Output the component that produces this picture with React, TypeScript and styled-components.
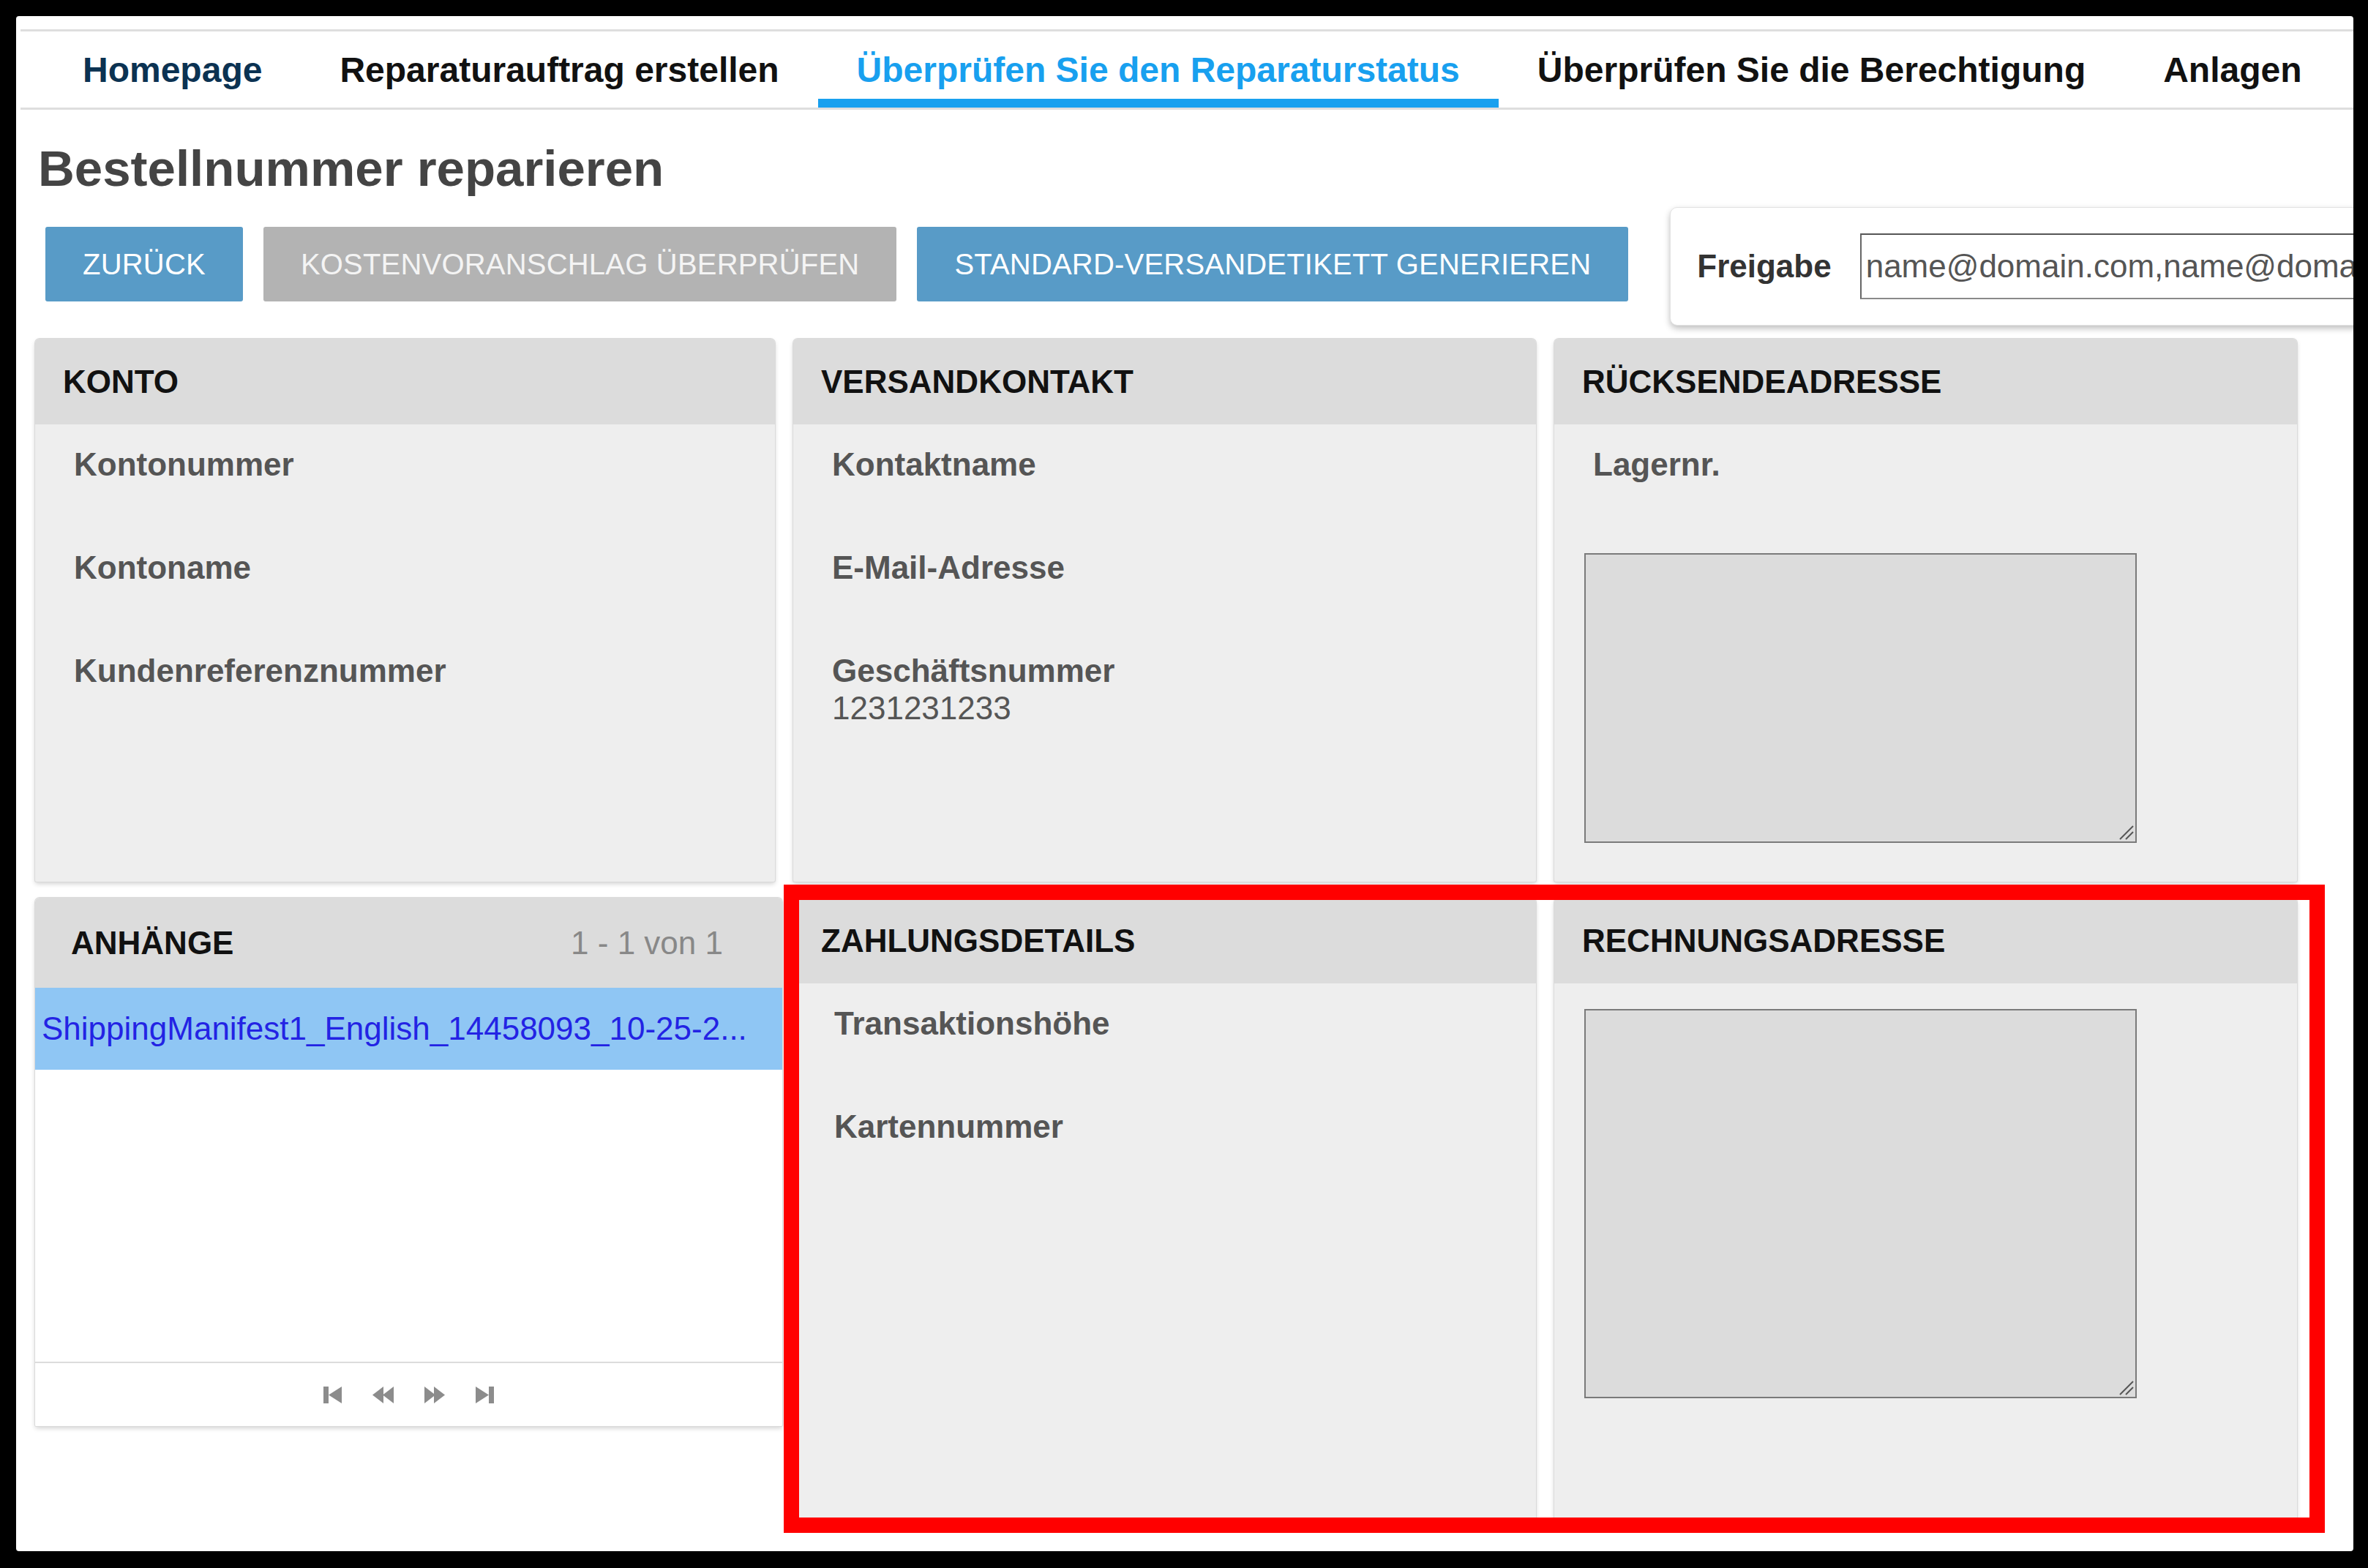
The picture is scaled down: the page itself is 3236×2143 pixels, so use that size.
import React from "react";
import styled, { createGlobalStyle } from "styled-components";

const GlobalStyle = createGlobalStyle`
  html, body {
    margin: 0;
    padding: 0;
    background: #000;
  }
  body {
    font-family: "Liberation Sans", Arial, sans-serif;
  }
  * {
    box-sizing: border-box;
  }
`;

type TabState = "home" | "active" | "plain";

const tabs: { label: string; state: TabState }[] = [
  { label: "Homepage", state: "home" },
  { label: "Reparaturauftrag erstellen", state: "plain" },
  { label: "Überprüfen Sie den Reparaturstatus", state: "active" },
  { label: "Überprüfen Sie die Berechtigung", state: "plain" },
  { label: "Anlagen", state: "plain" },
];

const HandleIcon = () => (
  <svg width="26" height="26" viewBox="0 0 26 26">
    <line x1="25" y1="7" x2="7" y2="25" stroke="#555" strokeWidth="2" />
    <line x1="25" y1="15" x2="15" y2="25" stroke="#555" strokeWidth="2" />
  </svg>
);

const FirstIcon = () => (
  <svg width="25" height="23" viewBox="0 0 25 23">
    <rect x="0" y="0" width="7" height="23" fill="#8c8c8c" />
    <polygon points="25,0 7,11.5 25,23" fill="#8c8c8c" />
  </svg>
);

const PrevIcon = () => (
  <svg width="29" height="23" viewBox="0 0 29 23">
    <polygon points="15,0 0,11.5 15,23" fill="#8c8c8c" />
    <polygon points="29,0 14,11.5 29,23" fill="#8c8c8c" />
  </svg>
);

const NextIcon = () => (
  <svg width="28" height="23" viewBox="0 0 28 23">
    <polygon points="0,0 15,11.5 0,23" fill="#8c8c8c" />
    <polygon points="13,0 28,11.5 13,23" fill="#8c8c8c" />
  </svg>
);

const LastIcon = () => (
  <svg width="25" height="23" viewBox="0 0 25 23">
    <polygon points="0,0 18,11.5 0,23" fill="#8c8c8c" />
    <rect x="18" y="0" width="7" height="23" fill="#8c8c8c" />
  </svg>
);

const App = () => {
  return (
    <>
      <GlobalStyle />
      <Frame>
        <Nav>
          {tabs.map((tab) => (
            <Tab key={tab.label} $state={tab.state}>
              {tab.label}
            </Tab>
          ))}
        </Nav>

        <Content>
          <Title>Bestellnummer reparieren</Title>

          <Toolbar>
            <ActionButton $tone="blue">Zurück</ActionButton>
            <ActionButton $tone="gray">Kostenvoranschlag überprüfen</ActionButton>
            <ActionButton $tone="blue">Standard-Versandetikett generieren</ActionButton>
            <ShareBox>
              <ShareLabel>Freigabe</ShareLabel>
              <ShareInput readOnly value="name@domain.com,name@domain.com" />
            </ShareBox>
          </Toolbar>

          <Grid>
            <Panel $height={742}>
              <PanelHeader>Konto</PanelHeader>
              <PanelBody>
                <Field>
                  <FieldLabel>Kontonummer</FieldLabel>
                </Field>
                <Field>
                  <FieldLabel>Kontoname</FieldLabel>
                </Field>
                <Field>
                  <FieldLabel>Kundenreferenznummer</FieldLabel>
                </Field>
              </PanelBody>
            </Panel>

            <Panel $height={742}>
              <PanelHeader>Versandkontakt</PanelHeader>
              <PanelBody>
                <Field>
                  <FieldLabel>Kontaktname</FieldLabel>
                </Field>
                <Field>
                  <FieldLabel>E-Mail-Adresse</FieldLabel>
                </Field>
                <Field>
                  <FieldLabel>Geschäftsnummer</FieldLabel>
                  <FieldValue>1231231233</FieldValue>
                </Field>
              </PanelBody>
            </Panel>

            <Panel $height={742}>
              <PanelHeader>Rücksendeadresse</PanelHeader>
              <PanelBody>
                <Field>
                  <FieldLabel>Lagernr.</FieldLabel>
                </Field>
                <AddressBox $height={396} $top={6}>
                  <ResizeHandle>
                    <HandleIcon />
                  </ResizeHandle>
                </AddressBox>
              </PanelBody>
            </Panel>

            <Panel $height={722} $wide $light>
              <PanelHeader $height={123} $padLeft={49} $padRight={81}>
                Anhänge
                <PageCount>1 - 1 von 1</PageCount>
              </PanelHeader>
              <AttachmentRow>ShippingManifest1_English_14458093_10-25-2...</AttachmentRow>
              <AttachmentList />
              <Pager>
                <FirstIcon />
                <PrevIcon />
                <NextIcon />
                <LastIcon />
              </Pager>
            </Panel>

            <Panel $height={858}>
              <PanelHeader>Zahlungsdetails</PanelHeader>
              <PanelBody $padLeft={56}>
                <Field>
                  <FieldLabel>Transaktionshöhe</FieldLabel>
                </Field>
                <Field>
                  <FieldLabel>Kartennummer</FieldLabel>
                </Field>
              </PanelBody>
            </Panel>

            <Panel $height={858}>
              <PanelHeader>Rechnungsadresse</PanelHeader>
              <PanelBody $padTop={35}>
                <AddressBox $height={532} $top={0}>
                  <ResizeHandle>
                    <HandleIcon />
                  </ResizeHandle>
                </AddressBox>
              </PanelBody>
            </Panel>
          </Grid>
        </Content>

        <Highlight />
      </Frame>
    </>
  );
};

export default App;

const Frame = styled.div`
  position: relative;
  margin: 22px 20px 0 22px;
  width: 3194px;
  height: 2098px;
  background: #fff;
  border-radius: 4px;
  overflow: hidden;
`;

const Nav = styled.nav`
  display: flex;
  height: 110px;
  margin: 18px 0 0 6px;
  padding-left: 32px;
  border-top: 3px solid #dedede;
  border-bottom: 3px solid #dedede;
`;

const Tab = styled.a<{ $state: TabState }>`
  display: flex;
  align-items: center;
  height: 100%;
  padding: 0 53px;
  font-size: 48px;
  font-weight: 700;
  white-space: nowrap;
  cursor: pointer;
  color: ${(p) =>
    p.$state === "home" ? "#0b3252" : p.$state === "active" ? "#18a0ef" : "#111"};
  box-shadow: ${(p) => (p.$state === "active" ? "inset 0 -12px 0 #18a0ef" : "none")};
`;

const Content = styled.main`
  padding: 0 76px 0 26px;
`;

const Title = styled.h1`
  margin: 41px 0 0 4px;
  font-size: 69px;
  line-height: 79px;
  font-weight: 700;
  color: #444;
`;

const Toolbar = styled.div`
  display: flex;
  align-items: flex-start;
  gap: 28px;
  margin: 13px -140px 0 0;
  padding-left: 14px;
`;

const ActionButton = styled.button<{ $tone: "blue" | "gray" }>`
  flex: none;
  height: 102px;
  margin-top: 27px;
  padding: 0 51px;
  border: none;
  border-radius: 3px;
  font-family: "Liberation Sans", Arial, sans-serif;
  font-size: 40px;
  letter-spacing: 0.2px;
  text-transform: uppercase;
  white-space: nowrap;
  color: ${(p) => (p.$tone === "blue" ? "#fff" : "#f4f4f4")};
  background: ${(p) => (p.$tone === "blue" ? "#589bc7" : "#b3b3b3")};
  cursor: pointer;
`;

const ShareBox = styled.div`
  flex: 1;
  display: flex;
  align-items: center;
  gap: 39px;
  height: 162px;
  margin-left: 29px;
  padding-left: 36px;
  background: #fff;
  border: 1px solid #e2e2e2;
  border-radius: 10px;
  box-shadow: 0 4px 8px rgba(0, 0, 0, 0.25);
`;

const ShareLabel = styled.span`
  font-size: 44px;
  font-weight: 700;
  color: #333;
`;

const ShareInput = styled.input`
  flex: 1;
  height: 90px;
  padding: 0 6px;
  border: 2px solid #8a8a8a;
  border-top-color: #555;
  border-left-color: #666;
  font-family: "Liberation Sans", Arial, sans-serif;
  font-size: 44px;
  color: #555;
  outline: none;
`;

const Grid = styled.div`
  display: grid;
  grid-template-columns: 1011px 1015px 1015px;
  column-gap: 25px;
  row-gap: 22px;
  align-items: start;
  margin-top: 18px;
`;

const Panel = styled.section<{ $height: number; $wide?: boolean; $light?: boolean }>`
  display: flex;
  flex-direction: column;
  height: ${(p) => p.$height}px;
  margin-right: ${(p) => (p.$wide ? "-10px" : "0")};
  background: ${(p) => (p.$light ? "#fff" : "#eee")};
  border-radius: 6px 6px 2px 2px;
  box-shadow: 0 0 0 1px #dadada, 0 3px 6px rgba(0, 0, 0, 0.18);
  overflow: hidden;
`;

const PanelHeader = styled.header<{ $height?: number; $padLeft?: number; $padRight?: number }>`
  flex: none;
  display: flex;
  align-items: center;
  justify-content: space-between;
  height: ${(p) => p.$height ?? 117}px;
  padding: 0 ${(p) => p.$padRight ?? 40}px 0 ${(p) => p.$padLeft ?? 38}px;
  background: #dcdcdc;
  font-size: 44px;
  font-weight: 700;
  color: #111;
  text-transform: uppercase;
`;

const PageCount = styled.span`
  font-weight: 400;
  color: #888;
  text-transform: none;
`;

const PanelBody = styled.div<{ $padTop?: number; $padLeft?: number }>`
  flex: 1;
  padding: ${(p) => p.$padTop ?? 29}px 0 0 ${(p) => p.$padLeft ?? 53}px;
`;

const Field = styled.div`
  min-height: 141px;
  font-size: 44px;
  line-height: 51px;
  color: #555;
`;

const FieldLabel = styled.div`
  font-weight: 700;
`;

const FieldValue = styled.div`
  font-weight: 400;
`;

const AddressBox = styled.div<{ $height: number; $top: number }>`
  position: relative;
  width: 755px;
  height: ${(p) => p.$height}px;
  margin: ${(p) => p.$top}px 0 0 -12px;
  background: #dcdcdc;
  border: 2px solid #7a7a7a;
`;

const ResizeHandle = styled.div`
  position: absolute;
  right: 2px;
  bottom: 2px;
  display: flex;
`;

const AttachmentRow = styled.div`
  flex: none;
  display: flex;
  align-items: center;
  height: 112px;
  padding-left: 9px;
  background: #8fc6f4;
  font-size: 44px;
  color: #2323e4;
  white-space: nowrap;
  overflow: hidden;
`;

const AttachmentList = styled.div`
  flex: 1;
  background: #fff;
`;

const Pager = styled.div`
  flex: none;
  display: flex;
  align-items: center;
  justify-content: center;
  gap: 42px;
  height: 88px;
  border-top: 2px solid #dcdcdc;
  background: #fff;
`;

const Highlight = styled.div`
  position: absolute;
  left: 1049px;
  top: 1187px;
  width: 2106px;
  height: 886px;
  border: 21px solid #ff0000;
  pointer-events: none;
`;
